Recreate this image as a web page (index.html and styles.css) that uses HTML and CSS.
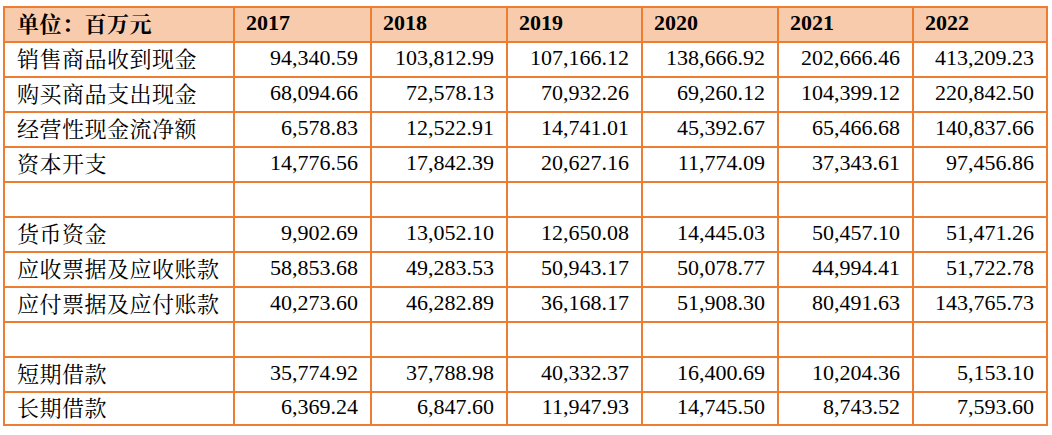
FILE: index.html
```html
<!DOCTYPE html>
<html lang="zh-CN">
<head>
<meta charset="utf-8">
<link rel="stylesheet" href="styles.css">
</head>
<body>
<div class="grid">
  <div class="c head label">单位：百万元</div>
  <div class="c head">2017</div>
  <div class="c head">2018</div>
  <div class="c head">2019</div>
  <div class="c head">2020</div>
  <div class="c head">2021</div>
  <div class="c head">2022</div>

  <div class="c label">销售商品收到现金</div>
  <div class="c num">94,340.59</div>
  <div class="c num">103,812.99</div>
  <div class="c num">107,166.12</div>
  <div class="c num">138,666.92</div>
  <div class="c num">202,666.46</div>
  <div class="c num">413,209.23</div>

  <div class="c label">购买商品支出现金</div>
  <div class="c num">68,094.66</div>
  <div class="c num">72,578.13</div>
  <div class="c num">70,932.26</div>
  <div class="c num">69,260.12</div>
  <div class="c num">104,399.12</div>
  <div class="c num">220,842.50</div>

  <div class="c label">经营性现金流净额</div>
  <div class="c num">6,578.83</div>
  <div class="c num">12,522.91</div>
  <div class="c num">14,741.01</div>
  <div class="c num">45,392.67</div>
  <div class="c num">65,466.68</div>
  <div class="c num">140,837.66</div>

  <div class="c label">资本开支</div>
  <div class="c num">14,776.56</div>
  <div class="c num">17,842.39</div>
  <div class="c num">20,627.16</div>
  <div class="c num">11,774.09</div>
  <div class="c num">37,343.61</div>
  <div class="c num">97,456.86</div>

  <div class="c"></div><div class="c"></div><div class="c"></div><div class="c"></div><div class="c"></div><div class="c"></div><div class="c"></div>

  <div class="c label">货币资金</div>
  <div class="c num">9,902.69</div>
  <div class="c num">13,052.10</div>
  <div class="c num">12,650.08</div>
  <div class="c num">14,445.03</div>
  <div class="c num">50,457.10</div>
  <div class="c num">51,471.26</div>

  <div class="c label">应收票据及应收账款</div>
  <div class="c num">58,853.68</div>
  <div class="c num">49,283.53</div>
  <div class="c num">50,943.17</div>
  <div class="c num">50,078.77</div>
  <div class="c num">44,994.41</div>
  <div class="c num">51,722.78</div>

  <div class="c label">应付票据及应付账款</div>
  <div class="c num">40,273.60</div>
  <div class="c num">46,282.89</div>
  <div class="c num">36,168.17</div>
  <div class="c num">51,908.30</div>
  <div class="c num">80,491.63</div>
  <div class="c num">143,765.73</div>

  <div class="c"></div><div class="c"></div><div class="c"></div><div class="c"></div><div class="c"></div><div class="c"></div><div class="c"></div>

  <div class="c label">短期借款</div>
  <div class="c num">35,774.92</div>
  <div class="c num">37,788.98</div>
  <div class="c num">40,332.37</div>
  <div class="c num">16,400.69</div>
  <div class="c num">10,204.36</div>
  <div class="c num">5,153.10</div>

  <div class="c label">长期借款</div>
  <div class="c num">6,369.24</div>
  <div class="c num">6,847.60</div>
  <div class="c num">11,947.93</div>
  <div class="c num">14,745.50</div>
  <div class="c num">8,743.52</div>
  <div class="c num">7,593.60</div>
</div>
</body>
</html>
```

FILE: styles.css
```css
html, body {
  margin: 0;
  padding: 0;
  background: #ffffff;
}

body {
  padding: 6px 0 0 3px;
}

.grid {
  display: grid;
  width: max-content;
  grid-template-columns: 228px 135px 134px 133px 134px 133px 132px;
  grid-template-rows: repeat(11, 33px) 31px;
  gap: 2px;
  padding: 2px;
  background: #ED7D31;
  font-family: "Liberation Serif", "Times New Roman", serif;
  font-size: 22px;
  color: #000000;
}

.c {
  background: #ffffff;
  display: flex;
  align-items: center;
  padding: 0 12px 3px 11px;
  white-space: nowrap;
  line-height: 1;
}

.head {
  background: #F8CBAD;
  font-weight: bold;
}

.label {
  padding-left: 12px;
  font-family: "Noto Serif CJK SC", "Noto Sans CJK SC", serif;
  letter-spacing: 0.5px;
}

.num {
  justify-content: flex-end;
}
```
